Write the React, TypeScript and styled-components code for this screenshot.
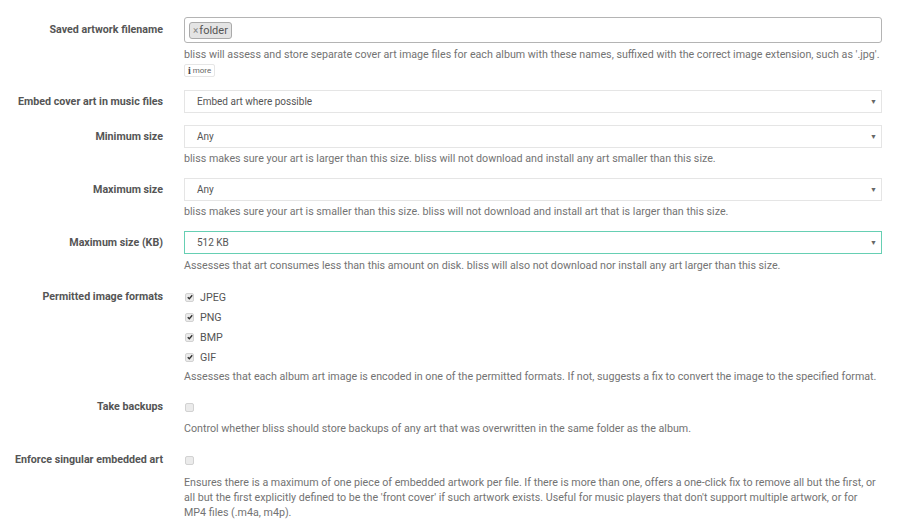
import React from "react";
import styled, { createGlobalStyle } from "styled-components";

const GlobalStyle = createGlobalStyle`
  body {
    margin: 0;
    background: #fff;
    font-family: Roboto, "Liberation Sans", Arial, sans-serif;
  }
`;

const Form = styled.div`
  display: flex;
  flex-direction: column;
  gap: 12px;
  padding: 17px 18px 0 0;
  width: 900px;
  box-sizing: border-box;
`;

const Row = styled.div<{ $mt?: number }>`
  display: flex;
  align-items: flex-start;
  gap: 21px;
  margin-top: ${(p) => p.$mt ?? 0}px;
`;

const Label = styled.div<{ $h: number }>`
  width: 163px;
  flex: none;
  text-align: right;
  font-size: 10.7px;
  font-weight: 700;
  color: #555;
  line-height: ${(p) => p.$h}px;
  white-space: nowrap;
`;

const Field = styled.div`
  flex: 1;
  display: flex;
  flex-direction: column;
  min-width: 0;
`;

const TagBox = styled.div`
  height: 26px;
  box-sizing: border-box;
  border: 1px solid #b4b4b4;
  border-radius: 3px;
  display: flex;
  align-items: center;
  padding: 0 4px;
`;

const Tag = styled.span`
  display: inline-flex;
  align-items: center;
  height: 17px;
  box-sizing: border-box;
  padding: 0 3px;
  background: #e4e4e4;
  border: 1px solid #aaa;
  border-radius: 3px;
  font-size: 11px;
  color: #555;
  b {
    font-weight: 400;
    color: #888;
    font-size: 10px;
    margin-right: 1px;
  }
`;

const Help = styled.div<{ $top?: number }>`
  margin-top: ${(p) => p.$top ?? 3}px;
  font-size: 10.7px;
  line-height: 15px;
  color: #737373;
`;

const More = styled.span`
  align-self: flex-start;
  margin: 2px 0 1px;
  display: inline-flex;
  align-items: center;
  gap: 2px;
  height: 13px;
  box-sizing: border-box;
  padding: 0 3px;
  border: 1px solid #e6e6e6;
  border-radius: 2px;
  font-size: 8px;
  color: #666;
  i {
    font-family: "Liberation Serif", serif;
    font-style: normal;
    font-weight: 700;
    font-size: 10px;
    color: #444;
  }
`;

const Select = styled.div<{ $focus?: boolean }>`
  height: 23px;
  box-sizing: border-box;
  border: 1px solid ${(p) => (p.$focus ? "#66cfb3" : "#e5e5e5")};
  display: flex;
  align-items: center;
  justify-content: space-between;
  padding: 0 4px 0 12px;
  font-size: 10px;
  color: #555;
`;

const Caret = styled.span`
  font-size: 7px;
  color: #666;
`;

const Checks = styled.div`
  display: flex;
  flex-direction: column;
`;

const CheckLine = styled.label`
  display: flex;
  align-items: center;
  gap: 6px;
  height: 20px;
  font-size: 10.7px;
  color: #555;
`;

const Box = styled.span<{ $on?: boolean }>`
  width: 7px;
  height: 7px;
  margin-left: 1px;
  border: 1px solid #d2d2d2;
  border-radius: 2px;
  background: #ebebeb;
  display: inline-flex;
  align-items: center;
  justify-content: center;
  svg {
    display: ${(p) => (p.$on ? "block" : "none")};
  }
`;

function Check({ on, label }: { on?: boolean; label?: string }) {
  return (
    <CheckLine>
      <Box $on={on}>
        <svg width="6" height="6" viewBox="0 0 8 8">
          <path d="M1 4.2 L3.1 6.3 L7 1.6" fill="none" stroke="#333" strokeWidth="1.8" />
        </svg>
      </Box>
      {label}
    </CheckLine>
  );
}

function Dropdown({ value, focus }: { value: string; focus?: boolean }) {
  return (
    <Select $focus={focus}>
      <span>{value}</span>
      <Caret>▼</Caret>
    </Select>
  );
}

export default function App() {
  return (
    <>
      <GlobalStyle />
      <Form>
        <Row>
          <Label $h={26}>Saved artwork filename</Label>
          <Field>
            <TagBox>
              <Tag>
                <b>×</b>folder
              </Tag>
            </TagBox>
            <Help $top={4}>
              bliss will assess and store separate cover art image files for each album with these names, suffixed
              with the correct image extension, such as '.jpg'.
            </Help>
            <More>
              <i>i</i>more
            </More>
          </Field>
        </Row>

        <Row>
          <Label $h={23}>Embed cover art in music files</Label>
          <Field>
            <Dropdown value="Embed art where possible" />
          </Field>
        </Row>

        <Row>
          <Label $h={23}>Minimum size</Label>
          <Field>
            <Dropdown value="Any" />
            <Help>
              bliss makes sure your art is larger than this size. bliss will not download and install any art smaller
              than this size.
            </Help>
          </Field>
        </Row>

        <Row>
          <Label $h={23}>Maximum size</Label>
          <Field>
            <Dropdown value="Any" />
            <Help>
              bliss makes sure your art is smaller than this size. bliss will not download and install art that is
              larger than this size.
            </Help>
          </Field>
        </Row>

        <Row>
          <Label $h={23}>Maximum size (KB)</Label>
          <Field>
            <Dropdown value="512 KB" focus />
            <Help $top={4}>
              Assesses that art consumes less than this amount on disk. bliss will also not download nor install any
              art larger than this size.
            </Help>
          </Field>
        </Row>

        <Row $mt={2}>
          <Label $h={20}>Permitted image formats</Label>
          <Field>
            <Checks>
              <Check on label="JPEG" />
              <Check on label="PNG" />
              <Check on label="BMP" />
              <Check on label="GIF" />
            </Checks>
            <Help $top={2}>
              Assesses that each album art image is encoded in one of the permitted formats. If not, suggests a fix to
              convert the image to the specified format.
            </Help>
          </Field>
        </Row>

        <Row $mt={1}>
          <Label $h={20}>Take backups</Label>
          <Field>
            <Check />
            <Help $top={4}>
              Control whether bliss should store backups of any art that was overwritten in the same folder as the
              album.
            </Help>
          </Field>
        </Row>

        <Row $mt={2}>
          <Label $h={20}>Enforce singular embedded art</Label>
          <Field>
            <Check />
            <Help $top={5}>
              Ensures there is a maximum of one piece of embedded artwork per file. If there is more than one, offers a
              one-click fix to remove all but the first, or all but the first explicitly defined to be the 'front
              cover' if such artwork exists. Useful for music players that don't support multiple artwork, or for MP4
              files (.m4a, m4p).
            </Help>
          </Field>
        </Row>
      </Form>
    </>
  );
}
